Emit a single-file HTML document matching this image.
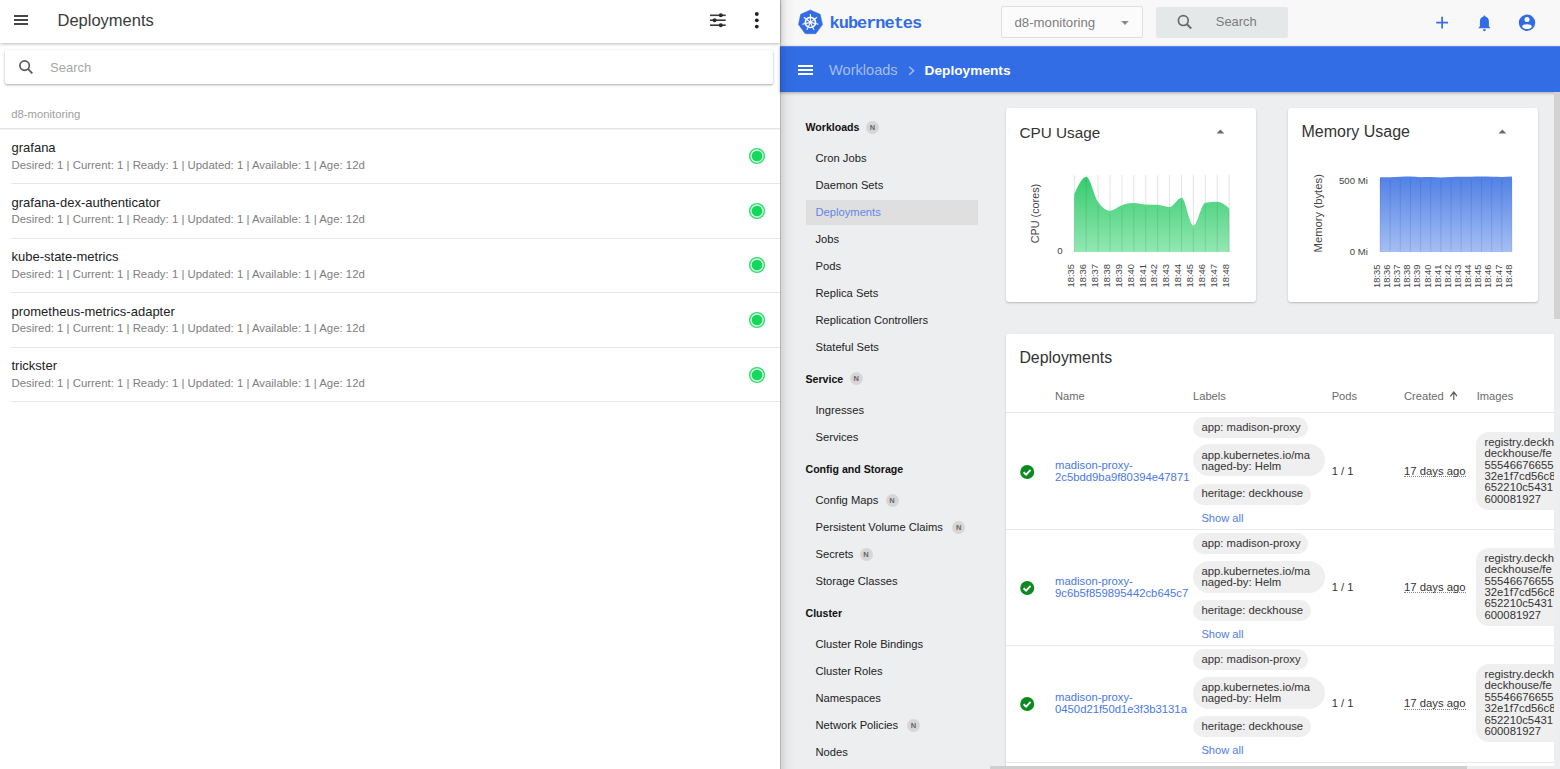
<!DOCTYPE html>
<html><head><meta charset="utf-8"><style>
html,body{margin:0;padding:0;width:1560px;height:769px;overflow:hidden;background:#fff;font-family:"Liberation Sans",sans-serif}
.t{position:absolute;white-space:pre}
.r{position:absolute}
</style></head><body>
<div class="r" style="left:0px;top:0px;width:780px;height:769px;background:#fff"></div>
<div class="t" style="left:11.20px;top:109.23px;font-size:11.3px;line-height:11.3px;color:#a0a0a0;font-weight:normal;font-family:'Liberation Sans',sans-serif;">d8-monitoring</div>
<div class="r" style="left:0px;top:128px;width:780px;height:1px;background:#e6e6e6"></div>
<div class="r" style="left:0px;top:129px;width:780px;height:1px;background:#f3f3f3"></div>
<div class="t" style="left:11.50px;top:141.00px;font-size:13px;line-height:13px;color:#222;font-weight:normal;font-family:'Liberation Sans',sans-serif;">grafana</div>
<div class="t" style="left:11.50px;top:159.65px;font-size:11.4px;line-height:11.4px;color:#7e7e7e;font-weight:normal;font-family:'Liberation Sans',sans-serif;">Desired: 1 | Current: 1 | Ready: 1 | Updated: 1 | Available: 1 | Age: 12d</div>
<div class="r" style="left:11px;top:183px;width:769px;height:1px;background:#e6e6e6"></div>
<svg class="r" style="left:748px;top:147.1px" width="18" height="18" viewBox="0 0 18 18"><circle cx="9" cy="9" r="7.4" fill="#d8f7e3" stroke="#2fde6d" stroke-width="1.4"/><circle cx="9" cy="9" r="5.3" fill="#12d95a"/></svg>
<div class="t" style="left:11.50px;top:195.60px;font-size:13px;line-height:13px;color:#222;font-weight:normal;font-family:'Liberation Sans',sans-serif;">grafana-dex-authenticator</div>
<div class="t" style="left:11.50px;top:214.25px;font-size:11.4px;line-height:11.4px;color:#7e7e7e;font-weight:normal;font-family:'Liberation Sans',sans-serif;">Desired: 1 | Current: 1 | Ready: 1 | Updated: 1 | Available: 1 | Age: 12d</div>
<div class="r" style="left:11px;top:238px;width:769px;height:1px;background:#e6e6e6"></div>
<svg class="r" style="left:748px;top:201.7px" width="18" height="18" viewBox="0 0 18 18"><circle cx="9" cy="9" r="7.4" fill="#d8f7e3" stroke="#2fde6d" stroke-width="1.4"/><circle cx="9" cy="9" r="5.3" fill="#12d95a"/></svg>
<div class="t" style="left:11.50px;top:250.20px;font-size:13px;line-height:13px;color:#222;font-weight:normal;font-family:'Liberation Sans',sans-serif;">kube-state-metrics</div>
<div class="t" style="left:11.50px;top:268.85px;font-size:11.4px;line-height:11.4px;color:#7e7e7e;font-weight:normal;font-family:'Liberation Sans',sans-serif;">Desired: 1 | Current: 1 | Ready: 1 | Updated: 1 | Available: 1 | Age: 12d</div>
<div class="r" style="left:11px;top:292px;width:769px;height:1px;background:#e6e6e6"></div>
<svg class="r" style="left:748px;top:256.3px" width="18" height="18" viewBox="0 0 18 18"><circle cx="9" cy="9" r="7.4" fill="#d8f7e3" stroke="#2fde6d" stroke-width="1.4"/><circle cx="9" cy="9" r="5.3" fill="#12d95a"/></svg>
<div class="t" style="left:11.50px;top:304.80px;font-size:13px;line-height:13px;color:#222;font-weight:normal;font-family:'Liberation Sans',sans-serif;">prometheus-metrics-adapter</div>
<div class="t" style="left:11.50px;top:323.45px;font-size:11.4px;line-height:11.4px;color:#7e7e7e;font-weight:normal;font-family:'Liberation Sans',sans-serif;">Desired: 1 | Current: 1 | Ready: 1 | Updated: 1 | Available: 1 | Age: 12d</div>
<div class="r" style="left:11px;top:347px;width:769px;height:1px;background:#e6e6e6"></div>
<svg class="r" style="left:748px;top:310.9px" width="18" height="18" viewBox="0 0 18 18"><circle cx="9" cy="9" r="7.4" fill="#d8f7e3" stroke="#2fde6d" stroke-width="1.4"/><circle cx="9" cy="9" r="5.3" fill="#12d95a"/></svg>
<div class="t" style="left:11.50px;top:359.40px;font-size:13px;line-height:13px;color:#222;font-weight:normal;font-family:'Liberation Sans',sans-serif;">trickster</div>
<div class="t" style="left:11.50px;top:378.05px;font-size:11.4px;line-height:11.4px;color:#7e7e7e;font-weight:normal;font-family:'Liberation Sans',sans-serif;">Desired: 1 | Current: 1 | Ready: 1 | Updated: 1 | Available: 1 | Age: 12d</div>
<div class="r" style="left:11px;top:401px;width:769px;height:1px;background:#e6e6e6"></div>
<svg class="r" style="left:748px;top:365.5px" width="18" height="18" viewBox="0 0 18 18"><circle cx="9" cy="9" r="7.4" fill="#d8f7e3" stroke="#2fde6d" stroke-width="1.4"/><circle cx="9" cy="9" r="5.3" fill="#12d95a"/></svg>
<div class="r" style="left:0px;top:0px;width:780px;height:43px;background:#fff;box-shadow:0 1px 3px rgba(0,0,0,0.28);z-index:2"></div>
<div class="r" style="left:14px;top:15px;width:14px;height:2px;background:#474747;z-index:3"></div>
<div class="r" style="left:14px;top:19px;width:14px;height:2px;background:#474747;z-index:3"></div>
<div class="r" style="left:14px;top:23px;width:14px;height:2px;background:#474747;z-index:3"></div>
<div class="t" style="left:57.50px;top:12.03px;font-size:16.5px;line-height:16.5px;color:#3a3a3a;font-weight:normal;font-family:'Liberation Sans',sans-serif;z-index:3">Deployments</div>
<svg class="r" style="left:705px;top:8px;z-index:3" width="26" height="26" viewBox="0 0 26 26"><g stroke="#3a3a3a" stroke-width="1.6"><line x1="5" y1="7.3" x2="20.7" y2="7.3"/><line x1="5" y1="12.2" x2="20.7" y2="12.2"/><line x1="5" y1="17.2" x2="20.7" y2="17.2"/></g><g fill="#2a2a2a"><circle cx="15.8" cy="7.3" r="2"/><circle cx="9.6" cy="12.2" r="2"/><circle cx="15.8" cy="17.2" r="2"/></g></svg>
<svg class="r" style="left:750px;top:8px;z-index:3" width="14" height="26" viewBox="0 0 14 26"><g fill="#222"><circle cx="6.8" cy="6" r="1.9"/><circle cx="6.8" cy="12.3" r="1.9"/><circle cx="6.8" cy="18.6" r="1.9"/></g></svg>
<div class="r" style="left:5px;top:50px;width:768px;height:34px;background:#fff;box-shadow:0 1px 2.5px rgba(0,0,0,0.35);border-radius:2px;z-index:1"></div>
<svg class="r" style="left:17px;top:58px;z-index:2" width="18" height="18" viewBox="0 0 18 18"><circle cx="7.6" cy="7.6" r="4.7" fill="none" stroke="#5c5c5c" stroke-width="1.7"/><line x1="10.9" y1="10.9" x2="15.3" y2="15.3" stroke="#5c5c5c" stroke-width="1.9"/></svg>
<div class="t" style="left:50.00px;top:60.80px;font-size:13px;line-height:13px;color:#a8a8a8;font-weight:normal;font-family:'Liberation Sans',sans-serif;z-index:2">Search</div>
<div class="r" style="left:780px;top:0px;width:1px;height:769px;background:rgba(0,0,0,0.24);z-index:9"></div>
<div class="r" style="left:780px;top:0px;width:780px;height:769px;background:#eceeef"></div>
<div class="r" style="left:780px;top:0px;width:780px;height:46px;background:#f8f8f8"></div>
<svg class="r" style="left:796px;top:7px" width="30" height="30" viewBox="0 0 30 30"><polygon points="14.4,2.9 24.2,7.3 26.5,17.5 19.8,26.7 9.2,26.7 2.5,17.5 4.6,7.3" fill="#326ce5" stroke="#326ce5" stroke-width="0.5" stroke-linejoin="round"/><circle cx="14.4" cy="15.4" r="5.1" fill="none" stroke="#fff" stroke-width="1.7"/><g stroke="#fff" stroke-width="1.1"><line x1="14.4" y1="15.4" x2="14.40" y2="7.10"/><line x1="14.4" y1="15.4" x2="20.89" y2="10.23"/><line x1="14.4" y1="15.4" x2="22.49" y2="17.25"/><line x1="14.4" y1="15.4" x2="18.00" y2="22.88"/><line x1="14.4" y1="15.4" x2="10.80" y2="22.88"/><line x1="14.4" y1="15.4" x2="6.31" y2="17.25"/><line x1="14.4" y1="15.4" x2="7.91" y2="10.23"/></g><circle cx="14.4" cy="15.4" r="1.3" fill="#fff"/></svg>
<div class="t" style="left:829.60px;top:14.81px;font-size:17px;line-height:17px;color:#326ce5;font-weight:bold;font-family:'Liberation Mono',sans-serif;letter-spacing:-1.05px">kubernetes</div>
<div class="r" style="left:1001px;top:6px;width:141px;height:30px;background:#fbfbfb;border:1px solid #dedede;border-radius:2px;box-sizing:border-box;width:142px;height:32px"></div>
<div class="t" style="left:1014.50px;top:15.83px;font-size:13.2px;line-height:13.2px;color:#7d7d7d;font-weight:normal;font-family:'Liberation Sans',sans-serif;">d8-monitoring</div>
<svg class="r" style="left:1120px;top:20px" width="10" height="6" viewBox="0 0 10 6"><polygon points="1.2,1 8.8,1 5,4.9" fill="#8a8a8a"/></svg>
<div class="r" style="left:1156px;top:7px;width:132px;height:31px;background:#e5e8e9;border-radius:2px"></div>
<svg class="r" style="left:1175px;top:12px" width="20" height="20" viewBox="0 0 20 20"><circle cx="8.3" cy="8.6" r="4.9" fill="none" stroke="#6a6a6a" stroke-width="1.7"/><line x1="11.7" y1="12" x2="16.2" y2="16.5" stroke="#6a6a6a" stroke-width="1.9"/></svg>
<div class="t" style="left:1215.80px;top:16.48px;font-size:12.9px;line-height:12.9px;color:#7b7b7b;font-weight:normal;font-family:'Liberation Sans',sans-serif;">Search</div>
<svg class="r" style="left:1434px;top:15px" width="16" height="16" viewBox="0 0 16 16"><g stroke="#326ce5" stroke-width="1.7"><line x1="2.2" y1="7.6" x2="14" y2="7.6"/><line x1="8.1" y1="1.7" x2="8.1" y2="13.4"/></g></svg>
<svg class="r" style="left:1476px;top:13.8px" width="17" height="20" viewBox="0 0 17 20"><path d="M8.4 1.5 C9 1.5 9.3 2 9.3 2.4 C11.8 3 12.9 5 12.9 7.5 L12.9 12.2 L14.6 14.3 L2.2 14.3 L3.9 12.2 L3.9 7.5 C3.9 5 5 3 7.5 2.4 C7.5 2 7.8 1.5 8.4 1.5Z" fill="#326ce5"/><path d="M6.9 15.3 L9.9 15.3 C9.9 16.3 9.2 17.3 8.4 17.3 C7.6 17.3 6.9 16.3 6.9 15.3Z" fill="#326ce5"/></svg>
<svg class="r" style="left:1517px;top:13px" width="20" height="20" viewBox="0 0 20 20"><defs><clipPath id="ac"><circle cx="10" cy="9.8" r="6.4"/></clipPath></defs><circle cx="10" cy="9.8" r="8.2" fill="#326ce5"/><circle cx="10" cy="6.5" r="2.5" fill="#fff"/><ellipse cx="10" cy="13.9" rx="4.9" ry="2.6" fill="#fff" clip-path="url(#ac)"/></svg>
<div class="r" style="left:780px;top:46px;width:780px;height:46px;background:#326de6;box-shadow:0 1px 3px rgba(0,0,0,0.3);z-index:2"></div>
<div class="r" style="left:780px;top:46px;width:780px;height:1px;background:#5a88ea;z-index:2"></div>
<div class="r" style="left:798px;top:65px;width:15px;height:2px;background:#fff;z-index:3"></div>
<div class="r" style="left:798px;top:69px;width:15px;height:2px;background:#fff;z-index:3"></div>
<div class="r" style="left:798px;top:73px;width:15px;height:2px;background:#fff;z-index:3"></div>
<div class="t" style="left:829.00px;top:62.64px;font-size:14.6px;line-height:14.6px;color:#a3bdf3;font-weight:normal;font-family:'Liberation Sans',sans-serif;z-index:3">Workloads</div>
<svg class="r" style="left:905px;top:62px;z-index:3" width="12" height="16" viewBox="0 0 12 16"><polyline points="4.2,4.8 8.6,8.8 4.2,12.8" fill="none" stroke="#a3bdf3" stroke-width="1.5"/></svg>
<div class="t" style="left:924.60px;top:63.60px;font-size:13.7px;line-height:13.7px;color:#fff;font-weight:bold;font-family:'Liberation Sans',sans-serif;z-index:3">Deployments</div>
<div class="r" style="left:806px;top:200px;width:172px;height:25px;background:#dfdfdf"></div>
<div class="t" style="left:805.50px;top:122.03px;font-size:10.6px;line-height:10.6px;color:#111;font-weight:bold;font-family:'Liberation Sans',sans-serif;">Workloads</div>
<div class="t" style="left:815.50px;top:153.42px;font-size:11.2px;line-height:11.2px;color:#222;font-weight:normal;font-family:'Liberation Sans',sans-serif;">Cron Jobs</div>
<div class="t" style="left:815.50px;top:180.42px;font-size:11.2px;line-height:11.2px;color:#222;font-weight:normal;font-family:'Liberation Sans',sans-serif;">Daemon Sets</div>
<div class="t" style="left:815.50px;top:207.22px;font-size:11.2px;line-height:11.2px;color:#5f86e8;font-weight:normal;font-family:'Liberation Sans',sans-serif;">Deployments</div>
<div class="t" style="left:815.50px;top:234.02px;font-size:11.2px;line-height:11.2px;color:#222;font-weight:normal;font-family:'Liberation Sans',sans-serif;">Jobs</div>
<div class="t" style="left:815.50px;top:261.02px;font-size:11.2px;line-height:11.2px;color:#222;font-weight:normal;font-family:'Liberation Sans',sans-serif;">Pods</div>
<div class="t" style="left:815.50px;top:288.02px;font-size:11.2px;line-height:11.2px;color:#222;font-weight:normal;font-family:'Liberation Sans',sans-serif;">Replica Sets</div>
<div class="t" style="left:815.50px;top:315.02px;font-size:11.2px;line-height:11.2px;color:#222;font-weight:normal;font-family:'Liberation Sans',sans-serif;">Replication Controllers</div>
<div class="t" style="left:815.50px;top:342.02px;font-size:11.2px;line-height:11.2px;color:#222;font-weight:normal;font-family:'Liberation Sans',sans-serif;">Stateful Sets</div>
<div class="t" style="left:805.50px;top:373.53px;font-size:10.6px;line-height:10.6px;color:#111;font-weight:bold;font-family:'Liberation Sans',sans-serif;">Service</div>
<div class="t" style="left:815.50px;top:404.52px;font-size:11.2px;line-height:11.2px;color:#222;font-weight:normal;font-family:'Liberation Sans',sans-serif;">Ingresses</div>
<div class="t" style="left:815.50px;top:431.52px;font-size:11.2px;line-height:11.2px;color:#222;font-weight:normal;font-family:'Liberation Sans',sans-serif;">Services</div>
<div class="t" style="left:805.50px;top:464.03px;font-size:10.6px;line-height:10.6px;color:#111;font-weight:bold;font-family:'Liberation Sans',sans-serif;">Config and Storage</div>
<div class="t" style="left:815.50px;top:494.52px;font-size:11.2px;line-height:11.2px;color:#222;font-weight:normal;font-family:'Liberation Sans',sans-serif;">Config Maps</div>
<div class="t" style="left:815.50px;top:521.52px;font-size:11.2px;line-height:11.2px;color:#222;font-weight:normal;font-family:'Liberation Sans',sans-serif;">Persistent Volume Claims</div>
<div class="t" style="left:815.50px;top:548.52px;font-size:11.2px;line-height:11.2px;color:#222;font-weight:normal;font-family:'Liberation Sans',sans-serif;">Secrets</div>
<div class="t" style="left:815.50px;top:575.52px;font-size:11.2px;line-height:11.2px;color:#222;font-weight:normal;font-family:'Liberation Sans',sans-serif;">Storage Classes</div>
<div class="t" style="left:805.50px;top:608.03px;font-size:10.6px;line-height:10.6px;color:#111;font-weight:bold;font-family:'Liberation Sans',sans-serif;">Cluster</div>
<div class="t" style="left:815.50px;top:638.52px;font-size:11.2px;line-height:11.2px;color:#222;font-weight:normal;font-family:'Liberation Sans',sans-serif;">Cluster Role Bindings</div>
<div class="t" style="left:815.50px;top:665.52px;font-size:11.2px;line-height:11.2px;color:#222;font-weight:normal;font-family:'Liberation Sans',sans-serif;">Cluster Roles</div>
<div class="t" style="left:815.50px;top:692.52px;font-size:11.2px;line-height:11.2px;color:#222;font-weight:normal;font-family:'Liberation Sans',sans-serif;">Namespaces</div>
<div class="t" style="left:815.50px;top:719.52px;font-size:11.2px;line-height:11.2px;color:#222;font-weight:normal;font-family:'Liberation Sans',sans-serif;">Network Policies</div>
<div class="t" style="left:815.50px;top:746.52px;font-size:11.2px;line-height:11.2px;color:#222;font-weight:normal;font-family:'Liberation Sans',sans-serif;">Nodes</div>
<div class="r" style="left:1006px;top:108px;width:250px;height:194px;background:#fff;border-radius:3px;box-shadow:0 1px 2px rgba(0,0,0,0.22);"></div>
<div class="r" style="left:1288px;top:108px;width:250px;height:194px;background:#fff;border-radius:3px;box-shadow:0 1px 2px rgba(0,0,0,0.22);"></div>
<div class="r" style="left:1006px;top:334px;width:560px;height:500px;background:#fff;border-radius:3px;box-shadow:0 1px 2px rgba(0,0,0,0.22);border-radius:3px 0 0 0"></div>
<div class="t" style="left:1019.50px;top:124.55px;font-size:15.3px;line-height:15.3px;color:#333;font-weight:normal;font-family:'Liberation Sans',sans-serif;">CPU Usage</div>
<div class="t" style="left:1301.50px;top:123.66px;font-size:16px;line-height:16px;color:#333;font-weight:normal;font-family:'Liberation Sans',sans-serif;">Memory Usage</div>
<svg class="r" style="left:1216px;top:129px" width="9" height="5" viewBox="0 0 9 5"><polygon points="0.5,4.6 8.3,4.6 4.4,0.4" fill="#6a6a6a"/></svg>
<svg class="r" style="left:1498px;top:129px" width="9" height="5" viewBox="0 0 9 5"><polygon points="0.5,4.6 8.3,4.6 4.4,0.4" fill="#6a6a6a"/></svg>
<div class="r" style="left:866.0px;top:120.5px;width:13px;height:13px;border-radius:50%;background:#d6d6d6;color:#666;font:bold 7.5px/13px 'Liberation Sans',sans-serif;text-align:center">N</div>
<div class="r" style="left:849.6px;top:371.5px;width:13px;height:13px;border-radius:50%;background:#d6d6d6;color:#666;font:bold 7.5px/13px 'Liberation Sans',sans-serif;text-align:center">N</div>
<div class="r" style="left:885.5px;top:493.7px;width:13px;height:13px;border-radius:50%;background:#d6d6d6;color:#666;font:bold 7.5px/13px 'Liberation Sans',sans-serif;text-align:center">N</div>
<div class="r" style="left:952.3px;top:520.5px;width:13px;height:13px;border-radius:50%;background:#d6d6d6;color:#666;font:bold 7.5px/13px 'Liberation Sans',sans-serif;text-align:center">N</div>
<div class="r" style="left:859.5px;top:547.5px;width:13px;height:13px;border-radius:50%;background:#d6d6d6;color:#666;font:bold 7.5px/13px 'Liberation Sans',sans-serif;text-align:center">N</div>
<div class="r" style="left:907.0px;top:718.5px;width:13px;height:13px;border-radius:50%;background:#d6d6d6;color:#666;font:bold 7.5px/13px 'Liberation Sans',sans-serif;text-align:center">N</div>
<svg class="r" style="left:1000px;top:160px" width="250" height="140" viewBox="0 0 250 140"><defs><linearGradient id="gc" x1="0" y1="0" x2="0" y2="1"><stop offset="0" stop-color="#36cc6e"/><stop offset="1" stop-color="#93e7b3"/></linearGradient><linearGradient id="gm" x1="0" y1="0" x2="0" y2="1"><stop offset="0" stop-color="#5181e6"/><stop offset="1" stop-color="#a3bdf2"/></linearGradient></defs><line x1="74.30" y1="15" x2="74.30" y2="92" stroke="#e4e4e4" stroke-width="1"/><line x1="86.21" y1="15" x2="86.21" y2="92" stroke="#e4e4e4" stroke-width="1"/><line x1="98.12" y1="15" x2="98.12" y2="92" stroke="#e4e4e4" stroke-width="1"/><line x1="110.03" y1="15" x2="110.03" y2="92" stroke="#e4e4e4" stroke-width="1"/><line x1="121.94" y1="15" x2="121.94" y2="92" stroke="#e4e4e4" stroke-width="1"/><line x1="133.85" y1="15" x2="133.85" y2="92" stroke="#e4e4e4" stroke-width="1"/><line x1="145.76" y1="15" x2="145.76" y2="92" stroke="#e4e4e4" stroke-width="1"/><line x1="157.67" y1="15" x2="157.67" y2="92" stroke="#e4e4e4" stroke-width="1"/><line x1="169.58" y1="15" x2="169.58" y2="92" stroke="#e4e4e4" stroke-width="1"/><line x1="181.49" y1="15" x2="181.49" y2="92" stroke="#e4e4e4" stroke-width="1"/><line x1="193.40" y1="15" x2="193.40" y2="92" stroke="#e4e4e4" stroke-width="1"/><line x1="205.31" y1="15" x2="205.31" y2="92" stroke="#e4e4e4" stroke-width="1"/><line x1="217.22" y1="15" x2="217.22" y2="92" stroke="#e4e4e4" stroke-width="1"/><line x1="229.13" y1="15" x2="229.13" y2="92" stroke="#e4e4e4" stroke-width="1"/><path d="M74.30,34.00 C78.27,25.35 82.24,16.70 86.21,16.70 C90.18,16.70 94.15,36.33 98.12,42.00 C102.09,47.67 106.06,50.70 110.03,50.70 C114.00,50.70 117.97,46.48 121.94,45.20 C125.91,43.92 129.88,43.00 133.85,43.00 C137.82,43.00 141.79,44.30 145.76,44.50 C149.73,44.70 153.70,44.60 157.67,44.80 C161.64,45.00 165.61,47.00 169.58,47.00 C173.55,47.00 177.52,37.70 181.49,37.70 C185.46,37.70 189.43,65.50 193.40,65.50 C197.37,65.50 201.34,43.30 205.31,42.70 C209.28,42.10 213.25,41.80 217.22,41.80 C221.19,41.80 225.16,45.00 229.13,48.20 L229.13,92 L74.30,92 Z" fill="url(#gc)"/><line x1="74.30" y1="37" x2="74.30" y2="92" stroke="rgba(0,80,30,0.13)" stroke-width="1"/><line x1="86.21" y1="19.69999999999999" x2="86.21" y2="92" stroke="rgba(0,80,30,0.13)" stroke-width="1"/><line x1="98.12" y1="45" x2="98.12" y2="92" stroke="rgba(0,80,30,0.13)" stroke-width="1"/><line x1="110.03" y1="53.69999999999999" x2="110.03" y2="92" stroke="rgba(0,80,30,0.13)" stroke-width="1"/><line x1="121.94" y1="48.19999999999999" x2="121.94" y2="92" stroke="rgba(0,80,30,0.13)" stroke-width="1"/><line x1="133.85" y1="46" x2="133.85" y2="92" stroke="rgba(0,80,30,0.13)" stroke-width="1"/><line x1="145.76" y1="47.5" x2="145.76" y2="92" stroke="rgba(0,80,30,0.13)" stroke-width="1"/><line x1="157.67" y1="47.80000000000001" x2="157.67" y2="92" stroke="rgba(0,80,30,0.13)" stroke-width="1"/><line x1="169.58" y1="50" x2="169.58" y2="92" stroke="rgba(0,80,30,0.13)" stroke-width="1"/><line x1="181.49" y1="40.69999999999999" x2="181.49" y2="92" stroke="rgba(0,80,30,0.13)" stroke-width="1"/><line x1="193.40" y1="68.5" x2="193.40" y2="92" stroke="rgba(0,80,30,0.13)" stroke-width="1"/><line x1="205.31" y1="45.69999999999999" x2="205.31" y2="92" stroke="rgba(0,80,30,0.13)" stroke-width="1"/><line x1="217.22" y1="44.80000000000001" x2="217.22" y2="92" stroke="rgba(0,80,30,0.13)" stroke-width="1"/><line x1="229.13" y1="51.19999999999999" x2="229.13" y2="92" stroke="rgba(0,80,30,0.13)" stroke-width="1"/><text x="39.399999999999906" y="53.5" transform="rotate(-90 39.399999999999906 53.5)" text-anchor="middle" font-family="Liberation Sans" font-size="10.8" fill="#444">CPU (cores)</text><text x="62.5" y="94.30000000000001" text-anchor="end" font-family="Liberation Sans" font-size="9.6" fill="#444">0</text><text x="74.10" y="104" transform="rotate(-90 74.10 104)" text-anchor="end" font-family="Liberation Sans" font-size="9.4" fill="#444">18:35</text><text x="86.01" y="104" transform="rotate(-90 86.01 104)" text-anchor="end" font-family="Liberation Sans" font-size="9.4" fill="#444">18:36</text><text x="97.92" y="104" transform="rotate(-90 97.92 104)" text-anchor="end" font-family="Liberation Sans" font-size="9.4" fill="#444">18:37</text><text x="109.83" y="104" transform="rotate(-90 109.83 104)" text-anchor="end" font-family="Liberation Sans" font-size="9.4" fill="#444">18:38</text><text x="121.74" y="104" transform="rotate(-90 121.74 104)" text-anchor="end" font-family="Liberation Sans" font-size="9.4" fill="#444">18:39</text><text x="133.65" y="104" transform="rotate(-90 133.65 104)" text-anchor="end" font-family="Liberation Sans" font-size="9.4" fill="#444">18:40</text><text x="145.56" y="104" transform="rotate(-90 145.56 104)" text-anchor="end" font-family="Liberation Sans" font-size="9.4" fill="#444">18:41</text><text x="157.47" y="104" transform="rotate(-90 157.47 104)" text-anchor="end" font-family="Liberation Sans" font-size="9.4" fill="#444">18:42</text><text x="169.38" y="104" transform="rotate(-90 169.38 104)" text-anchor="end" font-family="Liberation Sans" font-size="9.4" fill="#444">18:43</text><text x="181.29" y="104" transform="rotate(-90 181.29 104)" text-anchor="end" font-family="Liberation Sans" font-size="9.4" fill="#444">18:44</text><text x="193.20" y="104" transform="rotate(-90 193.20 104)" text-anchor="end" font-family="Liberation Sans" font-size="9.4" fill="#444">18:45</text><text x="205.11" y="104" transform="rotate(-90 205.11 104)" text-anchor="end" font-family="Liberation Sans" font-size="9.4" fill="#444">18:46</text><text x="217.02" y="104" transform="rotate(-90 217.02 104)" text-anchor="end" font-family="Liberation Sans" font-size="9.4" fill="#444">18:47</text><text x="228.93" y="104" transform="rotate(-90 228.93 104)" text-anchor="end" font-family="Liberation Sans" font-size="9.4" fill="#444">18:48</text></svg>
<svg class="r" style="left:1280px;top:160px" width="260" height="140" viewBox="0 0 260 140"><defs><linearGradient id="gm2" x1="0" y1="0" x2="0" y2="1"><stop offset="0" stop-color="#5181e6"/><stop offset="1" stop-color="#a5bff3"/></linearGradient></defs><path d="M100.00,17.30 C103.38,17.30 106.77,17.30 110.15,17.30 C113.53,17.30 116.92,16.92 120.30,16.80 C123.68,16.68 127.07,16.60 130.45,16.60 C133.83,16.60 137.22,17.20 140.60,17.20 C143.98,17.20 147.37,17.00 150.75,17.00 C154.13,17.00 157.52,17.40 160.90,17.40 C164.28,17.40 167.67,17.20 171.05,17.10 C174.43,17.00 177.82,16.80 181.20,16.80 C184.58,16.80 187.97,16.80 191.35,16.80 C194.73,16.80 198.12,16.60 201.50,16.60 C204.88,16.60 208.27,16.65 211.65,16.70 C215.03,16.75 218.42,16.90 221.80,16.90 C225.18,16.90 228.57,16.70 231.95,16.50 L231.95,92 L100.00,92 Z" fill="url(#gm2)"/><line x1="100.00" y1="19.30000000000001" x2="100.00" y2="92" stroke="rgba(20,40,120,0.13)" stroke-width="1"/><line x1="110.15" y1="19.30000000000001" x2="110.15" y2="92" stroke="rgba(20,40,120,0.13)" stroke-width="1"/><line x1="120.30" y1="18.80000000000001" x2="120.30" y2="92" stroke="rgba(20,40,120,0.13)" stroke-width="1"/><line x1="130.45" y1="18.599999999999994" x2="130.45" y2="92" stroke="rgba(20,40,120,0.13)" stroke-width="1"/><line x1="140.60" y1="19.19999999999999" x2="140.60" y2="92" stroke="rgba(20,40,120,0.13)" stroke-width="1"/><line x1="150.75" y1="19.0" x2="150.75" y2="92" stroke="rgba(20,40,120,0.13)" stroke-width="1"/><line x1="160.90" y1="19.400000000000006" x2="160.90" y2="92" stroke="rgba(20,40,120,0.13)" stroke-width="1"/><line x1="171.05" y1="19.099999999999994" x2="171.05" y2="92" stroke="rgba(20,40,120,0.13)" stroke-width="1"/><line x1="181.20" y1="18.80000000000001" x2="181.20" y2="92" stroke="rgba(20,40,120,0.13)" stroke-width="1"/><line x1="191.35" y1="18.80000000000001" x2="191.35" y2="92" stroke="rgba(20,40,120,0.13)" stroke-width="1"/><line x1="201.50" y1="18.599999999999994" x2="201.50" y2="92" stroke="rgba(20,40,120,0.13)" stroke-width="1"/><line x1="211.65" y1="18.69999999999999" x2="211.65" y2="92" stroke="rgba(20,40,120,0.13)" stroke-width="1"/><line x1="221.80" y1="18.900000000000006" x2="221.80" y2="92" stroke="rgba(20,40,120,0.13)" stroke-width="1"/><line x1="231.95" y1="18.5" x2="231.95" y2="92" stroke="rgba(20,40,120,0.13)" stroke-width="1"/><text x="42.00000000000004" y="53.30000000000001" transform="rotate(-90 42.00000000000004 53.30000000000001)" text-anchor="middle" font-family="Liberation Sans" font-size="11.3" fill="#444">Memory (bytes)</text><text x="87.79999999999995" y="24.30000000000001" text-anchor="end" font-family="Liberation Sans" font-size="9.6" fill="#444">500 Mi</text><text x="87.79999999999995" y="95.19999999999999" text-anchor="end" font-family="Liberation Sans" font-size="9.6" fill="#444">0 Mi</text><text x="99.80" y="104.5" transform="rotate(-90 99.80 104.5)" text-anchor="end" font-family="Liberation Sans" font-size="9.4" fill="#444">18:35</text><text x="109.95" y="104.5" transform="rotate(-90 109.95 104.5)" text-anchor="end" font-family="Liberation Sans" font-size="9.4" fill="#444">18:36</text><text x="120.10" y="104.5" transform="rotate(-90 120.10 104.5)" text-anchor="end" font-family="Liberation Sans" font-size="9.4" fill="#444">18:37</text><text x="130.25" y="104.5" transform="rotate(-90 130.25 104.5)" text-anchor="end" font-family="Liberation Sans" font-size="9.4" fill="#444">18:38</text><text x="140.40" y="104.5" transform="rotate(-90 140.40 104.5)" text-anchor="end" font-family="Liberation Sans" font-size="9.4" fill="#444">18:39</text><text x="150.55" y="104.5" transform="rotate(-90 150.55 104.5)" text-anchor="end" font-family="Liberation Sans" font-size="9.4" fill="#444">18:40</text><text x="160.70" y="104.5" transform="rotate(-90 160.70 104.5)" text-anchor="end" font-family="Liberation Sans" font-size="9.4" fill="#444">18:41</text><text x="170.85" y="104.5" transform="rotate(-90 170.85 104.5)" text-anchor="end" font-family="Liberation Sans" font-size="9.4" fill="#444">18:42</text><text x="181.00" y="104.5" transform="rotate(-90 181.00 104.5)" text-anchor="end" font-family="Liberation Sans" font-size="9.4" fill="#444">18:43</text><text x="191.15" y="104.5" transform="rotate(-90 191.15 104.5)" text-anchor="end" font-family="Liberation Sans" font-size="9.4" fill="#444">18:44</text><text x="201.30" y="104.5" transform="rotate(-90 201.30 104.5)" text-anchor="end" font-family="Liberation Sans" font-size="9.4" fill="#444">18:45</text><text x="211.45" y="104.5" transform="rotate(-90 211.45 104.5)" text-anchor="end" font-family="Liberation Sans" font-size="9.4" fill="#444">18:46</text><text x="221.60" y="104.5" transform="rotate(-90 221.60 104.5)" text-anchor="end" font-family="Liberation Sans" font-size="9.4" fill="#444">18:47</text><text x="231.75" y="104.5" transform="rotate(-90 231.75 104.5)" text-anchor="end" font-family="Liberation Sans" font-size="9.4" fill="#444">18:48</text></svg>
<div class="t" style="left:1019.40px;top:349.84px;font-size:15.9px;line-height:15.9px;color:#333;font-weight:normal;font-family:'Liberation Sans',sans-serif;">Deployments</div>
<div class="t" style="left:1055.00px;top:390.96px;font-size:11.15px;line-height:11.15px;color:#6b6b6b;font-weight:normal;font-family:'Liberation Sans',sans-serif;">Name</div>
<div class="t" style="left:1193.00px;top:390.96px;font-size:11.15px;line-height:11.15px;color:#6b6b6b;font-weight:normal;font-family:'Liberation Sans',sans-serif;">Labels</div>
<div class="t" style="left:1331.70px;top:390.96px;font-size:11.15px;line-height:11.15px;color:#6b6b6b;font-weight:normal;font-family:'Liberation Sans',sans-serif;">Pods</div>
<div class="t" style="left:1404.00px;top:390.96px;font-size:11.15px;line-height:11.15px;color:#6b6b6b;font-weight:normal;font-family:'Liberation Sans',sans-serif;">Created</div>
<div class="t" style="left:1476.70px;top:390.96px;font-size:11.15px;line-height:11.15px;color:#6b6b6b;font-weight:normal;font-family:'Liberation Sans',sans-serif;">Images</div>
<svg class="r" style="left:1449.6px;top:391.2px" width="7.6" height="9.3" viewBox="4 4 16 16" preserveAspectRatio="none"><path d="M4 12l1.8 1.8L10.8 8.8V20h2.4V8.8l5 5L20 12l-8-8-8 8z" fill="#5a5a5a"/></svg>
<div class="r" style="left:1006px;top:412px;width:548px;height:1px;background:#e8e8e8"></div>
<svg class="r" style="left:1019px;top:464.0px" width="16" height="16" viewBox="0 0 16 16"><circle cx="8.2" cy="8" r="7" fill="#0a8a1f"/><polyline points="4.6,8.2 7.1,10.6 11.6,5.9" fill="none" stroke="#fff" stroke-width="1.9"/></svg>
<div class="r" style="left:1055px;top:455.0px;width:136px;height:32px;overflow:hidden"><div class="t" style="left:0;top:4.63px;font-size:11.3px;line-height:11.3px;color:#4a78e6">madison-proxy-</div><div class="t" style="left:0;top:16.93px;font-size:11.3px;line-height:11.3px;color:#4a78e6">2c5bdd9ba9f80394e47871</div></div>
<div class="r" style="left:1193px;top:417px;width:115px;height:21px;background:#efefef;border-radius:11px"></div>
<div class="t" style="left:1201.40px;top:422.23px;font-size:11.3px;line-height:11.3px;color:#333;font-weight:normal;font-family:'Liberation Sans',sans-serif;">app: madison-proxy</div>
<div class="r" style="left:1193px;top:444px;width:132px;height:32px;background:#efefef;border-radius:16px"></div>
<div class="t" style="left:1201.40px;top:449.63px;font-size:11.3px;line-height:11.3px;color:#333;font-weight:normal;font-family:'Liberation Sans',sans-serif;">app.kubernetes.io/ma</div>
<div class="t" style="left:1201.40px;top:460.83px;font-size:11.3px;line-height:11.3px;color:#333;font-weight:normal;font-family:'Liberation Sans',sans-serif;">naged-by: Helm</div>
<div class="r" style="left:1193px;top:484px;width:118px;height:21px;background:#efefef;border-radius:11px"></div>
<div class="t" style="left:1201.40px;top:488.43px;font-size:11.3px;line-height:11.3px;color:#333;font-weight:normal;font-family:'Liberation Sans',sans-serif;">heritage: deckhouse</div>
<div class="t" style="left:1201.40px;top:512.56px;font-size:11.15px;line-height:11.15px;color:#4f7ee8;font-weight:normal;font-family:'Liberation Sans',sans-serif;">Show all</div>
<div class="t" style="left:1331.70px;top:465.52px;font-size:11.2px;line-height:11.2px;color:#333;font-weight:normal;font-family:'Liberation Sans',sans-serif;">1 / 1</div>
<div class="t" style="left:1404.00px;top:466.03px;font-size:11.3px;line-height:11.3px;color:#333;font-weight:normal;font-family:'Liberation Sans',sans-serif;border-bottom:1px dotted #888;line-height:10.3px">17 days ago</div>
<div class="r" style="left:1476px;top:432px;width:110px;height:78px;background:#efefef;border-radius:13px"></div>
<div class="t" style="left:1484.50px;top:436.73px;font-size:11.3px;line-height:11.3px;color:#333;font-weight:normal;font-family:'Liberation Sans',sans-serif;">registry.deckhouse.io/</div>
<div class="t" style="left:1484.50px;top:448.13px;font-size:11.3px;line-height:11.3px;color:#333;font-weight:normal;font-family:'Liberation Sans',sans-serif;">deckhouse/fe</div>
<div class="t" style="left:1484.50px;top:459.53px;font-size:11.3px;line-height:11.3px;color:#333;font-weight:normal;font-family:'Liberation Sans',sans-serif;">55546676655</div>
<div class="t" style="left:1484.50px;top:470.93px;font-size:11.3px;line-height:11.3px;color:#333;font-weight:normal;font-family:'Liberation Sans',sans-serif;">32e1f7cd56c8cc1e</div>
<div class="t" style="left:1484.50px;top:482.33px;font-size:11.3px;line-height:11.3px;color:#333;font-weight:normal;font-family:'Liberation Sans',sans-serif;">652210c5431</div>
<div class="t" style="left:1484.50px;top:493.73px;font-size:11.3px;line-height:11.3px;color:#333;font-weight:normal;font-family:'Liberation Sans',sans-serif;">600081927</div>
<div class="r" style="left:1006px;top:529px;width:548px;height:1px;background:#e8e8e8"></div>
<svg class="r" style="left:1019px;top:580.1px" width="16" height="16" viewBox="0 0 16 16"><circle cx="8.2" cy="8" r="7" fill="#0a8a1f"/><polyline points="4.6,8.2 7.1,10.6 11.6,5.9" fill="none" stroke="#fff" stroke-width="1.9"/></svg>
<div class="r" style="left:1055px;top:571.1px;width:136px;height:32px;overflow:hidden"><div class="t" style="left:0;top:4.63px;font-size:11.3px;line-height:11.3px;color:#4a78e6">madison-proxy-</div><div class="t" style="left:0;top:16.93px;font-size:11.3px;line-height:11.3px;color:#4a78e6">9c6b5f859895442cb645c7</div></div>
<div class="r" style="left:1193px;top:533px;width:115px;height:21px;background:#efefef;border-radius:11px"></div>
<div class="t" style="left:1201.40px;top:538.33px;font-size:11.3px;line-height:11.3px;color:#333;font-weight:normal;font-family:'Liberation Sans',sans-serif;">app: madison-proxy</div>
<div class="r" style="left:1193px;top:561px;width:132px;height:32px;background:#efefef;border-radius:16px"></div>
<div class="t" style="left:1201.40px;top:565.73px;font-size:11.3px;line-height:11.3px;color:#333;font-weight:normal;font-family:'Liberation Sans',sans-serif;">app.kubernetes.io/ma</div>
<div class="t" style="left:1201.40px;top:576.93px;font-size:11.3px;line-height:11.3px;color:#333;font-weight:normal;font-family:'Liberation Sans',sans-serif;">naged-by: Helm</div>
<div class="r" style="left:1193px;top:600px;width:118px;height:21px;background:#efefef;border-radius:11px"></div>
<div class="t" style="left:1201.40px;top:604.53px;font-size:11.3px;line-height:11.3px;color:#333;font-weight:normal;font-family:'Liberation Sans',sans-serif;">heritage: deckhouse</div>
<div class="t" style="left:1201.40px;top:628.66px;font-size:11.15px;line-height:11.15px;color:#4f7ee8;font-weight:normal;font-family:'Liberation Sans',sans-serif;">Show all</div>
<div class="t" style="left:1331.70px;top:581.62px;font-size:11.2px;line-height:11.2px;color:#333;font-weight:normal;font-family:'Liberation Sans',sans-serif;">1 / 1</div>
<div class="t" style="left:1404.00px;top:582.13px;font-size:11.3px;line-height:11.3px;color:#333;font-weight:normal;font-family:'Liberation Sans',sans-serif;border-bottom:1px dotted #888;line-height:10.3px">17 days ago</div>
<div class="r" style="left:1476px;top:548px;width:110px;height:78px;background:#efefef;border-radius:13px"></div>
<div class="t" style="left:1484.50px;top:552.83px;font-size:11.3px;line-height:11.3px;color:#333;font-weight:normal;font-family:'Liberation Sans',sans-serif;">registry.deckhouse.io/</div>
<div class="t" style="left:1484.50px;top:564.23px;font-size:11.3px;line-height:11.3px;color:#333;font-weight:normal;font-family:'Liberation Sans',sans-serif;">deckhouse/fe</div>
<div class="t" style="left:1484.50px;top:575.63px;font-size:11.3px;line-height:11.3px;color:#333;font-weight:normal;font-family:'Liberation Sans',sans-serif;">55546676655</div>
<div class="t" style="left:1484.50px;top:587.03px;font-size:11.3px;line-height:11.3px;color:#333;font-weight:normal;font-family:'Liberation Sans',sans-serif;">32e1f7cd56c8cc1e</div>
<div class="t" style="left:1484.50px;top:598.43px;font-size:11.3px;line-height:11.3px;color:#333;font-weight:normal;font-family:'Liberation Sans',sans-serif;">652210c5431</div>
<div class="t" style="left:1484.50px;top:609.83px;font-size:11.3px;line-height:11.3px;color:#333;font-weight:normal;font-family:'Liberation Sans',sans-serif;">600081927</div>
<div class="r" style="left:1006px;top:645px;width:548px;height:1px;background:#e8e8e8"></div>
<svg class="r" style="left:1019px;top:696.2px" width="16" height="16" viewBox="0 0 16 16"><circle cx="8.2" cy="8" r="7" fill="#0a8a1f"/><polyline points="4.6,8.2 7.1,10.6 11.6,5.9" fill="none" stroke="#fff" stroke-width="1.9"/></svg>
<div class="r" style="left:1055px;top:687.2px;width:136px;height:32px;overflow:hidden"><div class="t" style="left:0;top:4.63px;font-size:11.3px;line-height:11.3px;color:#4a78e6">madison-proxy-</div><div class="t" style="left:0;top:16.93px;font-size:11.3px;line-height:11.3px;color:#4a78e6">0450d21f50d1e3f3b3131a</div></div>
<div class="r" style="left:1193px;top:649px;width:115px;height:21px;background:#efefef;border-radius:11px"></div>
<div class="t" style="left:1201.40px;top:654.43px;font-size:11.3px;line-height:11.3px;color:#333;font-weight:normal;font-family:'Liberation Sans',sans-serif;">app: madison-proxy</div>
<div class="r" style="left:1193px;top:677px;width:132px;height:32px;background:#efefef;border-radius:16px"></div>
<div class="t" style="left:1201.40px;top:681.83px;font-size:11.3px;line-height:11.3px;color:#333;font-weight:normal;font-family:'Liberation Sans',sans-serif;">app.kubernetes.io/ma</div>
<div class="t" style="left:1201.40px;top:693.03px;font-size:11.3px;line-height:11.3px;color:#333;font-weight:normal;font-family:'Liberation Sans',sans-serif;">naged-by: Helm</div>
<div class="r" style="left:1193px;top:716px;width:118px;height:21px;background:#efefef;border-radius:11px"></div>
<div class="t" style="left:1201.40px;top:720.63px;font-size:11.3px;line-height:11.3px;color:#333;font-weight:normal;font-family:'Liberation Sans',sans-serif;">heritage: deckhouse</div>
<div class="t" style="left:1201.40px;top:744.76px;font-size:11.15px;line-height:11.15px;color:#4f7ee8;font-weight:normal;font-family:'Liberation Sans',sans-serif;">Show all</div>
<div class="t" style="left:1331.70px;top:697.72px;font-size:11.2px;line-height:11.2px;color:#333;font-weight:normal;font-family:'Liberation Sans',sans-serif;">1 / 1</div>
<div class="t" style="left:1404.00px;top:698.23px;font-size:11.3px;line-height:11.3px;color:#333;font-weight:normal;font-family:'Liberation Sans',sans-serif;border-bottom:1px dotted #888;line-height:10.3px">17 days ago</div>
<div class="r" style="left:1476px;top:664px;width:110px;height:78px;background:#efefef;border-radius:13px"></div>
<div class="t" style="left:1484.50px;top:668.93px;font-size:11.3px;line-height:11.3px;color:#333;font-weight:normal;font-family:'Liberation Sans',sans-serif;">registry.deckhouse.io/</div>
<div class="t" style="left:1484.50px;top:680.33px;font-size:11.3px;line-height:11.3px;color:#333;font-weight:normal;font-family:'Liberation Sans',sans-serif;">deckhouse/fe</div>
<div class="t" style="left:1484.50px;top:691.73px;font-size:11.3px;line-height:11.3px;color:#333;font-weight:normal;font-family:'Liberation Sans',sans-serif;">55546676655</div>
<div class="t" style="left:1484.50px;top:703.13px;font-size:11.3px;line-height:11.3px;color:#333;font-weight:normal;font-family:'Liberation Sans',sans-serif;">32e1f7cd56c8cc1e</div>
<div class="t" style="left:1484.50px;top:714.53px;font-size:11.3px;line-height:11.3px;color:#333;font-weight:normal;font-family:'Liberation Sans',sans-serif;">652210c5431</div>
<div class="t" style="left:1484.50px;top:725.93px;font-size:11.3px;line-height:11.3px;color:#333;font-weight:normal;font-family:'Liberation Sans',sans-serif;">600081927</div>
<div class="r" style="left:1006px;top:762px;width:548px;height:1px;background:#e8e8e8"></div>
<div class="r" style="left:1554px;top:92px;width:6px;height:677px;background:#eceeef;z-index:6"></div>
<div class="r" style="left:1554px;top:92px;width:6px;height:227px;background:#d2d2d2;z-index:7"></div>
<div class="r" style="left:990px;top:766px;width:564px;height:3px;background:#eceeef;z-index:6"></div>
<div class="r" style="left:990px;top:766px;width:477px;height:3px;background:#cfcfcf;z-index:7"></div>
<div class="r" style="left:781px;top:0px;width:15px;height:769px;background:linear-gradient(to right, rgba(0,0,0,0.11), rgba(0,0,0,0.03) 40%, rgba(0,0,0,0));z-index:8"></div>
</body></html>
